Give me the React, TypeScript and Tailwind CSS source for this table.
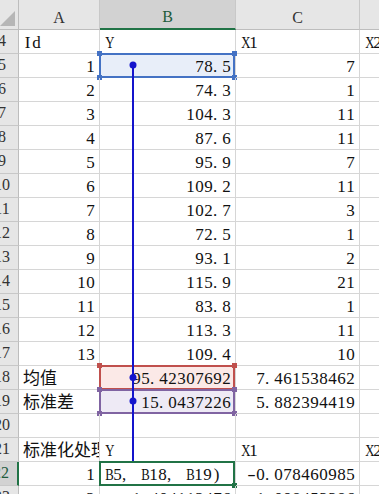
type Mark = "blue" | "red" | "purple" | "edit";

interface Row {
  n: number;
  a?: string;
  b?: string;
  c?: string;
  d?: string;
  mark?: Mark;
}

const Y = ["78.5", "74.3", "104.3", "87.6", "95.9", "109.2", "102.7", "72.5", "93.1", "115.9", "83.8", "113.3", "109.4"];
const X1 = ["7", "1", "11", "11", "7", "11", "3", "1", "2", "21", "1", "11", "10"];

const ROWS: Row[] = [
  { n: 4, a: "Id", b: "Y", c: "X1", d: "X2" },
  ...Y.map((y, i): Row => ({ n: i + 5, a: String(i + 1), b: y, c: X1[i], mark: i === 0 ? "blue" : undefined })),
  { n: 18, a: "均值", b: "95.42307692", c: "7.461538462", mark: "red" },
  { n: 19, a: "标准差", b: "15.0437226", c: "5.882394419", mark: "purple" },
  { n: 20 },
  { n: 21, a: "标准化处理", b: "Y", c: "X1", d: "X2" },
  { n: 22, a: "1", b: "B5, B18, B19)", c: "-0.078460985", mark: "edit" },
  { n: 23, a: "2", b: "-1.404112476", c: "-1.098453386" },
];

const ALL = ["-left-[4px] -top-[4px]", "-right-[4px] -top-[4px]", "-left-[4px] -bottom-[4px]", "-right-[4px] -bottom-[4px]"];

const MARKS: Record<Mark, { fill: string; border: string; handle: string; handles: string[] }> = {
  blue: { fill: "bg-[#e8eef9]", border: "border-[#4472c4]", handle: "bg-[#4472c4]", handles: ALL },
  red: { fill: "bg-[#fbe9e7]", border: "border-[#c0504d]", handle: "bg-[#c0504d]", handles: ALL },
  purple: { fill: "bg-[#eeeaf5]", border: "border-[#8064a2]", handle: "bg-[#8064a2]", handles: ALL },
  edit: { fill: "bg-white", border: "border-[#217346]", handle: "bg-[#217346]", handles: ["-right-[4px] -bottom-[4px]"] },
};

// half-width cells like SimSun: every latin char takes 9px
function CellText({ text }: { text: string }) {
  return (
    <span>
      {Array.from(text).map((ch, i) => {
        if (/[\u2e80-\u9fff]/.test(ch)) return <span key={i}>{ch}</span>;
        const cls = /[A-HJ-Z]/.test(ch)
          ? "scale-x-75 text-center"
          : ch === "-"
            ? "scale-x-150 text-center"
            : /[.,]/.test(ch)
              ? "text-left"
              : "text-center";
        return (
          <span key={i} className={`inline-block w-[9px] ${cls}`}>
            {ch}
          </span>
        );
      })}
    </span>
  );
}

function Cell({ width, text, mark }: { width: string; text?: string; mark?: Mark }) {
  const right = !!text && /^-?[\d.]+$/.test(text);
  const m = mark ? MARKS[mark] : undefined;
  return (
    <div className={`relative h-[24px] shrink-0 border-r border-b border-[#d6d6d6] ${width} ${m ? m.fill : ""}`}>
      <div
        className={`flex h-full items-end overflow-hidden whitespace-nowrap text-[17px] leading-[20px] ${
          right ? "justify-end pr-[4px]" : "justify-start pl-[4px]"
        }`}
      >
        {text && <CellText text={text} />}
      </div>
      {m && (
        <div className={`absolute -top-[1px] -left-[1px] right-0 -bottom-[1px] border-2 ${m.border}`}>
          {m.handles.map((h) => (
            <span key={h} className={`absolute h-[5px] w-[5px] ${m.handle} ${h}`} />
          ))}
        </div>
      )}
    </div>
  );
}

function RowHead({ n }: { n: number }) {
  const selected = n === 22;
  return (
    <div
      className={`flex h-[24px] w-[19px] shrink-0 items-end justify-end overflow-hidden border-b border-[#c8c8c8] ${
        selected ? "border-r-2 border-r-[#217346] bg-[#d2d2d2] text-[#215c3c]" : "border-r border-r-[#bdbdbd] bg-[#e6e6e6] text-[#333]"
      }`}
    >
      <span className="w-[32px] shrink-0 pb-[2px] text-center text-[16px] leading-[20px]">{n}</span>
    </div>
  );
}

function ColHead({ width, label, selected }: { width: string; label: string; selected?: boolean }) {
  return (
    <div
      className={`flex h-[30px] shrink-0 items-end justify-center border-r border-r-[#c8c8c8] text-[16px] leading-[20px] ${width} ${
        selected ? "border-b-2 border-b-[#217346] bg-[#d2d2d2] text-[#215c3c]" : "border-b border-b-[#bdbdbd] bg-[#e6e6e6] text-[#333]"
      }`}
    >
      <span className="pb-[1px]">{label}</span>
    </div>
  );
}

export default function App() {
  return (
    <div className="relative h-[494px] w-[379px] overflow-hidden bg-white font-['Liberation_Serif','Noto_Sans_CJK_SC',serif] text-[#111]">
      <div className="flex">
        <div className="h-[30px] w-[19px] shrink-0 border-r border-b border-[#bdbdbd] bg-[#e6e6e6]">
          <svg width="18" height="29" viewBox="0 0 18 29">
            <polygon points="0,26 15,26 15,11" fill="#b6b6b6" />
          </svg>
        </div>
        <ColHead width="w-[81px]" label="A" />
        <ColHead width="w-[136px]" label="B" selected />
        <ColHead width="w-[124px]" label="C" />
        <ColHead width="w-[40px]" label="" />
      </div>

      {ROWS.map((row) => (
        <div key={row.n} className="flex">
          <RowHead n={row.n} />
          <Cell width="w-[81px]" text={row.a} />
          <Cell width="w-[136px]" text={row.b} mark={row.mark} />
          <Cell width="w-[124px]" text={row.c} />
          <Cell width="w-[40px]" text={row.d} />
        </div>
      ))}

      {/* trace precedents arrow */}
      <svg className="pointer-events-none absolute top-0 left-0" width="379" height="494">
        <line x1="133" y1="65" x2="133" y2="461" stroke="#1414cc" strokeWidth="2" />
        <circle cx="133" cy="65" r="3.5" fill="#1414cc" />
        <circle cx="133" cy="377.5" r="3.5" fill="#1414cc" />
        <circle cx="133" cy="401" r="3.5" fill="#1414cc" />
      </svg>
    </div>
  );
}
